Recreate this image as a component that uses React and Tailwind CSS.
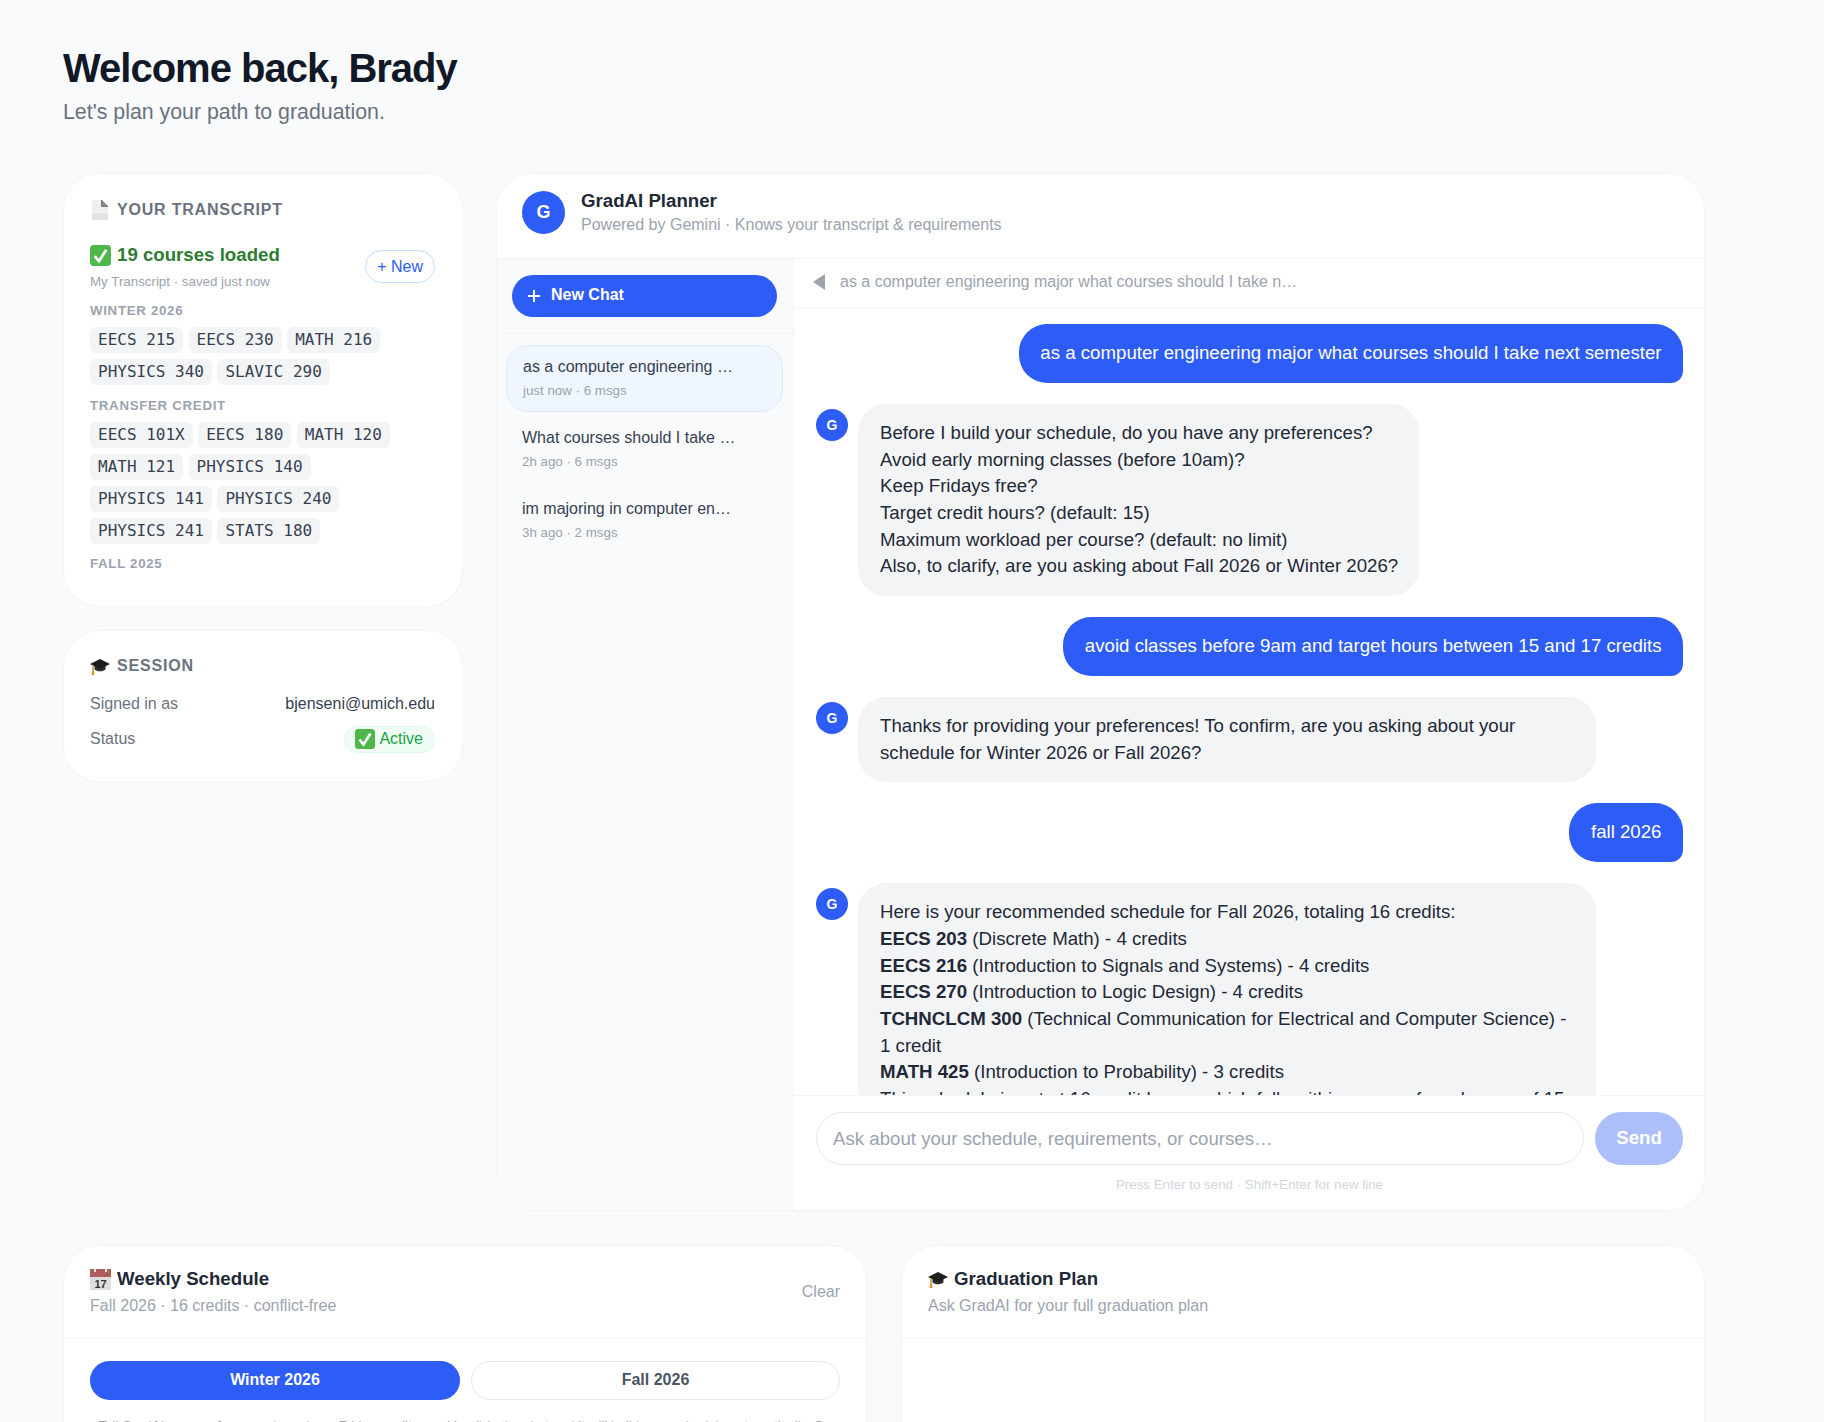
function DocIcon({ className }) {
  return (
    <svg viewBox="0 0 16 20" className={className}>
      <path d="M0 0h10l6 6v14H0z" fill="#f0f0f0" />
      <path d="M0 13h16v7H0z" fill="#e3e3e3" />
      <path d="M10 0l6 6h-6z" fill="#8a8a8a" />
      <path d="M9.6 0v6.4H16" fill="none" stroke="#6b6b6b" strokeWidth="1" />
    </svg>
  );
}
function CheckIcon({ className }) {
  return (
    <svg viewBox="0 0 20 20" className={className}>
      <rect width="20" height="20" rx="3.5" fill="#4fb74a" />
      <path d="M4.5 10.5l4 5 7-11" fill="none" stroke="#fff" strokeWidth="2.6" />
    </svg>
  );
}
function CapIcon({ className }) {
  return (
    <svg viewBox="0 0 20 20" className={className}>
      <path d="M4.5 9v4.5c3 2.4 8 2.4 11 0V9z" fill="#2b2b2b" />
      <path d="M10 3L20 8l-10 5L0 8z" fill="#1e1e1e" />
      <path d="M3 9.2v6" stroke="#c98a2b" strokeWidth="1.4" />
      <path d="M2 15h2l.4 4h-2.8z" fill="#d9962f" />
    </svg>
  );
}
function CalendarIcon({ className }) {
  return (
    <svg viewBox="0 0 21 21" className={className}>
      <rect y="7" width="21" height="14" fill="#dedede" />
      <rect width="21" height="8" fill="#ac5f5b" />
      <rect x="4" y="0" width="2" height="3" fill="#e9e2e2" />
      <rect x="15" y="0" width="2" height="3" fill="#e9e2e2" />
      <text x="10.5" y="19" textAnchor="middle" fontSize="11" fontFamily="'Liberation Sans', sans-serif" fill="#333">17</text>
    </svg>
  );
}
function Chip({ children }) {
  return (
    <span className="rounded-md bg-[#f3f4f6] px-2 py-[3px] font-['DejaVu_Sans_Mono',monospace] text-[16px] leading-[20px] text-[#374151]">
      {children}
    </span>
  );
}
function Term({ children }) {
  return <div className="text-[13.33px] font-bold leading-[16px] tracking-[0.667px] text-[#9ca3af]">{children}</div>;
}
function Avatar() {
  return (
    <div className="flex h-8 w-8 shrink-0 items-center justify-center rounded-full bg-[#2d5cf6] text-[14px] font-bold text-white">G</div>
  );
}
function UserMsg({ children }) {
  return (
    <div className="flex shrink-0 justify-end">
      <div className="h-[59px] rounded-[28px] rounded-br-[12px] bg-[#2d5cf6] px-[21.5px] py-[16px] text-[18.67px] leading-[26.67px] text-white">{children}</div>
    </div>
  );
}
function BotMsg({ children, wide }) {
  return (
    <div className="flex shrink-0 items-start gap-[10px]">
      <div className="mt-[5px]"><Avatar /></div>
      <div className={"rounded-[28px] bg-[#f3f4f6] py-[16px] pl-[22px] pr-[21px] text-[18.67px] leading-[26.67px] text-[#1f2937] " + (wide ? "w-[738px]" : "")}>{children}</div>
    </div>
  );
}
function Thread({ title, meta, active }) {
  return (
    <div className={"rounded-[22px] border pb-[11px] pl-[15px] pr-[16px] pt-[9px] " + (active ? "border-[#dbeafe] bg-[#eff6ff] pl-[16px]" : "border-transparent")}>
      <div className="whitespace-nowrap text-[16px] leading-[24px] text-[#374151]">{title}</div>
      <div className="mt-[3px] text-[13.33px] leading-[18px] text-[#9ca3af]">{meta}</div>
    </div>
  );
}

export default function App() {
  return (
    <div className="h-[1422px] overflow-hidden bg-[#f9fafb] pl-[63px] pr-[119px] pt-[42px] font-['Liberation_Sans',Arial,sans-serif]">
      <h1 className="text-[40px] font-bold leading-[52px] tracking-[-1px] text-[#111827]">Welcome back, Brady</h1>
      <p className="mt-[3px] text-[21.33px] leading-[30px] text-[#6b7280]">Let's plan your path to graduation.</p>

      <div className="mt-[46px] flex items-start gap-[33px]">
        <div className="flex w-[400px] shrink-0 flex-col gap-[23px]">
          <section className="rounded-[36px] border border-[#f3f4f6] bg-white pb-[34px] pl-[26px] pr-[27px] pt-[26px]">
            <div className="flex items-center gap-[9px] text-[16px] font-bold leading-[20px] tracking-[0.8px] text-[#6b7280]">
              <DocIcon className="ml-[2px] h-5 w-4" />
              <span>YOUR TRANSCRIPT</span>
            </div>
            <div className="mt-[23px] flex items-start justify-between">
              <div>
                <div className="flex items-center gap-[6px] text-[18.67px] font-bold leading-[24px] text-[#2e7d32]">
                  <CheckIcon className="h-[21px] w-[21px]" />
                  <span>19 courses loaded</span>
                </div>
                <div className="mt-[6px] text-[13.33px] leading-[18px] text-[#9ca3af]">My Transcript · saved just now</div>
              </div>
              <button className="mt-[7px] h-[33px] rounded-full border border-[#bfdbfe] bg-white px-[11px] text-[16px] text-[#2d5cf6]">+ New</button>
            </div>
            <div className="mt-[12px]"><Term>WINTER 2026</Term></div>
            <div className="mt-[8px] flex flex-wrap gap-x-[5.5px] gap-y-[6px]">
              {["EECS 215","EECS 230","MATH 216","PHYSICS 340","SLAVIC 290"].map(c => <Chip key={c}>{c}</Chip>)}
            </div>
            <div className="mt-[13px]"><Term>TRANSFER CREDIT</Term></div>
            <div className="mt-[8px] flex flex-wrap gap-x-[5.5px] gap-y-[6px]">
              {["EECS 101X","EECS 180","MATH 120","MATH 121","PHYSICS 140","PHYSICS 141","PHYSICS 240","PHYSICS 241","STATS 180"].map(c => <Chip key={c}>{c}</Chip>)}
            </div>
            <div className="mt-[12px]"><Term>FALL 2025</Term></div>
          </section>

          <section className="rounded-[36px] border border-[#f3f4f6] bg-white pb-[28px] pl-[26px] pr-[27px] pt-[25px]">
            <div className="flex items-center gap-[7px] text-[16px] font-bold leading-[20px] tracking-[0.8px] text-[#6b7280]">
              <CapIcon className="h-5 w-5" />
              <span>SESSION</span>
            </div>
            <div className="mt-[16px] flex items-center justify-between text-[16px] leading-[24px]">
              <span className="text-[#6b7280]">Signed in as</span>
              <span className="text-[#374151]">bjenseni@umich.edu</span>
            </div>
            <div className="mt-[10px] flex items-center justify-between text-[16px] leading-[24px]">
              <span className="pb-[2px] text-[#6b7280]">Status</span>
              <span className="flex h-[27px] items-center gap-[4px] rounded-full border border-[#dcfce7] bg-[#f0fdf4] pb-[1px] pl-[10px] pr-[11px] text-[#16a34a]">
                <CheckIcon className="h-5 w-5" />Active
              </span>
            </div>
          </section>
        </div>

        <section className="flex h-[1038px] min-w-0 flex-1 flex-col overflow-hidden rounded-[36px] border border-[#f3f4f6] bg-white">
          <div className="flex h-[85px] shrink-0 items-start gap-[16px] border-b border-[#f3f4f6] px-[25px] pt-[15px]">
            <div className="mt-[2px] flex h-[43px] w-[43px] items-center justify-center rounded-full bg-[#2d5cf6] text-[18px] font-bold text-white">G</div>
            <div>
              <div className="text-[18.67px] font-bold leading-[24px] text-[#1f2937]">GradAI Planner</div>
              <div className="mt-[1px] text-[16px] leading-[22px] text-[#9ca3af]">Powered by Gemini · Knows your transcript &amp; requirements</div>
            </div>
          </div>
          <div className="flex min-h-0 flex-1">
            <aside className="flex w-[297px] shrink-0 flex-col border-r border-[#f3f4f6] bg-[#f9fafb]">
              <div className="border-b border-[#f3f4f6] py-[16px] pl-[15px] pr-[16px]">
                <button className="flex h-[42px] w-full items-center gap-[11px] rounded-full bg-[#2d5cf6] px-[16px] text-[16px] font-bold text-white">
                  <svg viewBox="0 0 12 12" className="h-3 w-3"><path d="M6 0v12M0 6h12" stroke="#fff" strokeWidth="2" /></svg>
                  <span className="pb-[3px]">New Chat</span>
                </button>
              </div>
              <div className="flex flex-col gap-[4px] pb-[11px] pl-[9px] pr-[10px] pt-[11px]">
                <Thread active title="as a computer engineering …" meta="just now · 6 msgs" />
                <Thread title="What courses should I take …" meta="2h ago · 6 msgs" />
                <Thread title="im majoring in computer en…" meta="3h ago · 2 msgs" />
              </div>
            </aside>
            <div className="flex min-w-0 flex-1 flex-col">
              <div className="flex h-[49px] shrink-0 items-center gap-[15px] border-b border-[#f3f4f6] px-[19px] pb-[2px] text-[16px] text-[#9ca3af]">
                <svg viewBox="0 0 12 16" className="h-4 w-3"><path d="M12 0v16L0 8z" fill="#9ca3af" /></svg>
                <span>as a computer engineering major what courses should I take n…</span>
              </div>
              <div className="flex min-h-0 flex-1 flex-col gap-[21px] overflow-hidden py-[16px] pl-[22px] pr-[21px]">
                <UserMsg>as a computer engineering major what courses should I take next semester</UserMsg>
                <BotMsg>
                  Before I build your schedule, do you have any preferences?<br />
                  Avoid early morning classes (before 10am)?<br />
                  Keep Fridays free?<br />
                  Target credit hours? (default: 15)<br />
                  Maximum workload per course? (default: no limit)<br />
                  Also, to clarify, are you asking about Fall 2026 or Winter 2026?
                </BotMsg>
                <UserMsg>avoid classes before 9am and target hours between 15 and 17 credits</UserMsg>
                <BotMsg wide>
                  Thanks for providing your preferences! To confirm, are you asking about your schedule for Winter 2026 or Fall 2026?
                </BotMsg>
                <UserMsg>fall 2026</UserMsg>
                <BotMsg wide>
                  Here is your recommended schedule for Fall 2026, totaling 16 credits:<br />
                  <b>EECS 203</b> (Discrete Math) - 4 credits<br />
                  <b>EECS 216</b> (Introduction to Signals and Systems) - 4 credits<br />
                  <b>EECS 270</b> (Introduction to Logic Design) - 4 credits<br />
                  <b>TCHNCLCM 300</b> (Technical Communication for Electrical and Computer Science) - 1 credit<br />
                  <b>MATH 425</b> (Introduction to Probability) - 3 credits<br />
                  This schedule is set at 16 credit hours, which falls within your preferred range of 15 to 17 credits.
                </BotMsg>
              </div>
              <div className="shrink-0 border-t border-[#f3f4f6] bg-white pb-[16px] pl-[22px] pr-[21px] pt-[16px]">
                <div className="flex gap-[11px]">
                  <div className="flex h-[53px] flex-1 items-center rounded-full border border-[#e5e7eb] px-[16px] text-[18.67px] text-[#9ca3af]">Ask about your schedule, requirements, or courses…</div>
                  <button className="h-[53px] w-[88px] rounded-full bg-[#adbffb] pb-[2px] text-[18.67px] font-bold text-white">Send</button>
                </div>
                <div className="mt-[11px] text-center text-[13.33px] leading-[18px] text-[#d1d5db]">Press Enter to send · Shift+Enter for new line</div>
              </div>
            </div>
          </div>
        </section>
      </div>

      <div className="mt-[34px] grid grid-cols-[804px_1fr] gap-[34px]">
        <section className="h-[400px] rounded-[36px] border border-[#f3f4f6] bg-white">
          <div className="flex items-center justify-between border-b border-[#f3f4f6] px-[26px] pb-[21px] pt-[20px]">
            <div>
              <div className="flex items-center gap-[6px] pt-[1px] text-[18.67px] font-bold leading-[24px] text-[#1f2937]"><CalendarIcon className="h-[21px] w-[21px]" />Weekly Schedule</div>
              <div className="mt-[4px] text-[16px] leading-[22px] text-[#9ca3af]">Fall 2026 · 16 credits · conflict-free</div>
            </div>
            <span className="text-[16px] text-[#9ca3af]">Clear</span>
          </div>
          <div className="px-[26px] pt-[22px]">
            <div className="flex gap-[11px]">
              <button className="h-[39px] w-[370px] rounded-full bg-[#2d5cf6] pb-[2px] text-[16px] font-bold text-white">Winter 2026</button>
              <button className="h-[39px] flex-1 rounded-full border border-[#e5e7eb] pb-[2px] text-[16px] font-bold text-[#4b5563]">Fall 2026</button>
            </div>
            <p className="mt-[17px] whitespace-nowrap text-center text-[13.33px] leading-[18px] text-[#9ca3af]">Tell GradAI your preferences (mornings, Friday credits, workload) in the chat and it will build your schedule automatically. Go</p>
          </div>
        </section>
        <section className="h-[400px] rounded-[36px] border border-[#f3f4f6] bg-white">
          <div className="flex items-center border-b border-[#f3f4f6] px-[26px] pb-[21px] pt-[20px]">
            <div>
              <div className="flex items-center gap-[6px] pt-[1px] text-[18.67px] font-bold leading-[24px] text-[#1f2937]"><CapIcon className="h-5 w-5" />Graduation Plan</div>
              <div className="mt-[4px] text-[16px] leading-[22px] text-[#9ca3af]">Ask GradAI for your full graduation plan</div>
            </div>
          </div>
        </section>
      </div>
    </div>
  );
}
